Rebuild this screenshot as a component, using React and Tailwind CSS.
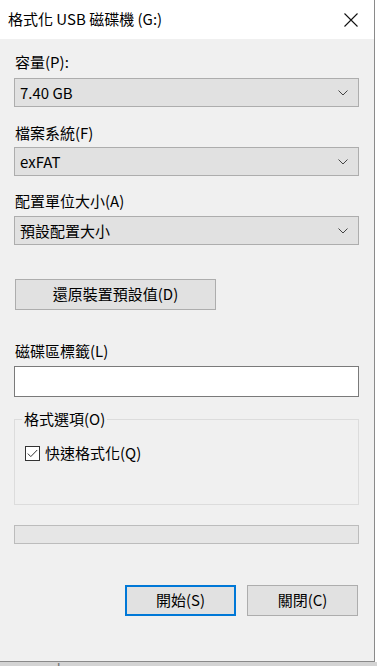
import { useState } from "react";

const font = { fontFamily: '"Segoe UI", "Noto Sans CJK TC", "Noto Sans", sans-serif' };

function Chevron() {
  return (
    <svg width="10" height="6" viewBox="0 0 10 6" className="shrink-0">
      <path d="M0.5 0.5 L5 5 L9.5 0.5" fill="none" stroke="#444" strokeWidth="1" />
    </svg>
  );
}

function Select({ value }) {
  return (
    <div className="ml-[14px] w-[345px] h-[29px] bg-[#e1e1e1] border border-[#adadad] flex items-center justify-between pl-[5px] pr-[10px]">
      <span className="text-[15px] text-black leading-none">{value}</span>
      <Chevron />
    </div>
  );
}

function Label({ children, className }) {
  return (
    <div className={"ml-[15px] h-[20px] text-[15px] leading-[20px] text-black " + className}>{children}</div>
  );
}

export default function App() {
  const [quick, setQuick] = useState(true);
  const [label, setLabel] = useState("");

  return (
    <div className="w-[377px] h-[666px] overflow-hidden bg-white flex flex-col" style={font}>
      <div className="w-[375px] h-[662px] shrink-0 bg-[#f0f0f0] border-r border-b border-[#8a8a8a] flex flex-col">
        {/* 標題列 */}
        <div className="h-[39px] bg-white flex items-center justify-between pl-[8px] pr-[16px] shrink-0">
          <span className="text-[15px] text-black">格式化 USB 磁碟機 (G:)</span>
          <svg width="14" height="14" viewBox="0 0 14 14">
            <path d="M0.5 0.5 L13.5 13.5 M13.5 0.5 L0.5 13.5" stroke="#111" strokeWidth="1.1" />
          </svg>
        </div>

        <Label className="mt-[13px]">容量(P):</Label>
        <div className="mt-[6px]"><Select value="7.40 GB" /></div>

        <Label className="mt-[16px]">檔案系統(F)</Label>
        <div className="mt-[4px]"><Select value="exFAT" /></div>

        <Label className="mt-[15px]">配置單位大小(A)</Label>
        <div className="mt-[5px]"><Select value="預設配置大小" /></div>

        <button className="mt-[34px] ml-[15px] w-[201px] h-[31px] bg-[#e1e1e1] border border-[#adadad] text-[15px] text-black">
          還原裝置預設值(D)
        </button>

        <Label className="mt-[31px]">磁碟區標籤(L)</Label>
        <input
          value={label}
          onChange={(e) => setLabel(e.target.value)}
          className="mt-[5px] ml-[14px] w-[345px] h-[31px] bg-white border border-[#7a7a7a] outline-none px-1 text-[15px]"
        />

        {/* 格式選項 */}
        <div className="relative mt-[22px] ml-[14px] w-[345px] h-[86px] border border-[#dcdcdc] shrink-0">
          <span className="absolute -top-[11px] left-[7px] px-[2px] bg-[#f0f0f0] text-[15px] leading-[20px] text-black">
            格式選項(O)
          </span>
          <label className="mt-[23px] ml-[10px] flex items-center gap-[5px] cursor-default" onClick={() => setQuick(!quick)}>
            <span className="w-[15px] h-[15px] bg-white border border-[#333] flex items-center justify-center">
              {quick && (
                <svg width="11" height="9" viewBox="0 0 11 9">
                  <path d="M0.8 4.6 L3.8 7.6 L10.2 1" fill="none" stroke="#333" strokeWidth="1" />
                </svg>
              )}
            </span>
            <span className="text-[15px] leading-[20px] text-black">快速格式化(Q)</span>
          </label>
        </div>

        <div className="mt-[20px] ml-[14px] w-[345px] h-[19px] bg-[#e6e6e6] border border-[#bcbcbc]" />

        <div className="mt-[41px] flex gap-[11px] ml-[125px]">
          <button className="w-[111px] h-[31px] bg-[#e1e1e1] border-2 border-[#0078d7] text-[15px] text-black">
            開始(S)
          </button>
          <button className="w-[111px] h-[31px] bg-[#e1e1e1] border border-[#adadad] text-[15px] text-black">
            關閉(C)
          </button>
        </div>
      </div>
      <div className="h-[4px] bg-[#d4d4d4] overflow-hidden shrink-0">
        <div className="pl-[2px] text-[15px] leading-[14px] text-[#777]" style={{ fontFamily: '"Liberation Sans", sans-serif' }}>
          reserved
        </div>
      </div>
    </div>
  );
}
